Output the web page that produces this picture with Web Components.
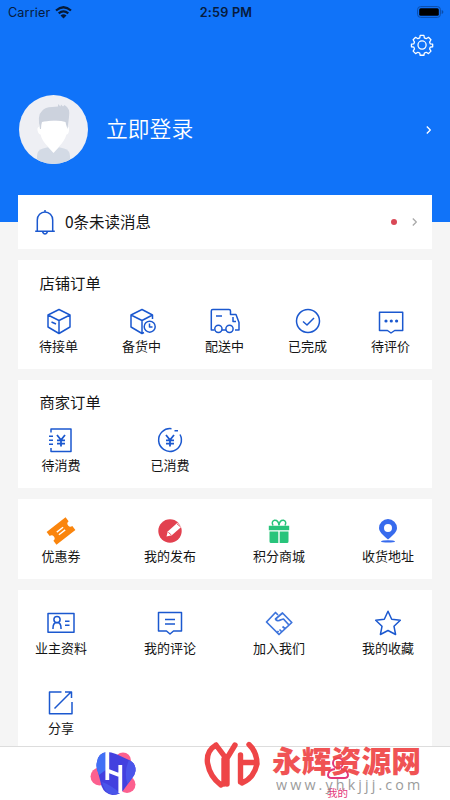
<!DOCTYPE html>
<html lang="zh-CN">
<head>
<meta charset="utf-8">
<title>我的</title>
<style>
html,body{margin:0;height:100%;overflow:hidden}
body{font-family:"Noto Sans CJK SC",sans-serif;background:#f5f5f5;color:#151515}
</style>
</head>
<body>
<profile-page></profile-page>
<script>
const define=(name,html)=>customElements.define(name,class extends HTMLElement{
  constructor(){super();this.attachShadow({mode:'open'}).innerHTML=html;}
});

const ICONS={
 box:'<path d="M15 3.500 26 9v12l-11 6.500L4 21V9ZM4 9l11 5.500L26 9M15 14.500v13M7.500 16l4.500 2"/>',
 boxclock:'<path d="M25.500 13V9L15 3.500 4 9v12l11 6.500 2-1M4 9l11 5.500L25.500 9M15 14.500v13"/><circle cx="22.700" cy="20.700" r="5.500" fill="#fff"/><path d="M22.500 17.500v3.500h3"/>',
 truck:'<path d="M4.500 24H1.300V5q0-1.500 1.500-1.500H19q1.500 0 1.500 1.500v3.500H26l3 8V24h-4M12 24h4M23 11v4.500h3M6 10h6"/><circle cx="8.400" cy="22.800" r="3.600" fill="#fff"/><circle cx="19.500" cy="22.800" r="3.600" fill="#fff"/>',
 check:'<circle cx="15" cy="15" r="11.500"/><path d="m10 15.500 4 3.500 7-7"/>',
 dots:'<path d="M3.500 6.300h23.200v18.200h-8L15 27l-3.500-2.500h-8Z"/><g fill="#1b58cf" stroke="none"><circle cx="10" cy="15" r="1.600"/><circle cx="15.300" cy="15" r="1.600"/><circle cx="20.600" cy="15" r="1.600"/></g>',
 bill:'<path d="M5 7.500V4h20v22.500H5V23M3 11.300h4M3 15.300h4M3 19.300h4"/><path stroke-width="1.800" d="m11 10 4 5 4-5M15 15v6.500M11 15.300h8M11 18.700h8"/>',
 coin:'<path d="M16.500 3.700A11.400 11.400 0 1 0 25 9.500M19.500 5.700h3.500"/><path stroke-width="1.800" d="m11 10 4 5 4-5M15 15v6.500M11 15.300h8M11 18.700h8"/>',
 ticket:'<g transform="rotate(-38 15 15)"><path fill="#fa850d" stroke="none" d="M3 7h24v5a3 3 0 0 0 0 6v5h-24v-5a3 3 0 0 0 0-6Z"/><path stroke="#fff" stroke-width="1.400" d="M11 13.300h8M11 16.700h8"/></g>',
 edit:'<circle cx="15" cy="15" r="11.700" fill="#e2414f" stroke="none"/><path fill="#fff" stroke="none" d="m11.500 20.500 1.200-5L22.500 6.800l4.300 3.700-10 8.800Z"/><path stroke="#e2414f" stroke-width="1" d="m13.500 16.300 2.500 2.500M22 7.800l3.500 3"/>',
 gift:'<g stroke="none" fill="#28c47b"><path d="M4.800 9.800h20.400v4.400H4.800ZM5.500 15.500h8.800V27H7q-1.500 0-1.500-1.500ZM15.700 15.500h8.800v10q0 1.500-1.500 1.500h-7.300Z"/></g><path stroke="#28c47b" stroke-width="1.500" d="M15 9.500q-.5-5.500-4.500-5.200-3.500 1-1.500 5.200M15 9.500q.5-5.500 4.500-5.200 3.500 1 1.500 5.200"/>',
 pin:'<path fill="#376bed" fill-rule="evenodd" stroke="none" d="M15 23.500C9 18.500 6 15.500 6 12a9 9 0 0 1 18 0c0 3.500-3 6.500-9 11.500Zm0-15.500a4 4 0 1 0 0 8 4 4 0 0 0 0-8Z"/><ellipse cx="15" cy="25.400" rx="7" ry="1.200" fill="#376bed" stroke="none"/>',
 card:'<path d="M2 5.500h26v18.700H2ZM7 21v-1q0-5.500 4-5.500t4 5.500v1M19 13.300h4.500M19 17.200h4.500"/><circle cx="11" cy="11.600" r="3.100"/>',
 comment:'<path d="M3.500 4.500h23V23h-8L15 26l-3.500-3h-8ZM10 11.500h10M10 16h10"/>',
 shake:'<g stroke="#3d74dc" stroke-width="1.700"><path d="M14 7 11.500 4.500 2.500 14 15 26.500 27.800 14.500 18.500 5 11.500 11q1.500 3 5.500.8l2.500-.8L24.500 16.500M15.500 21.500l2.500 2.500M18.500 18.500l3 2.500M13 25l1.500-2"/></g>',
 star:'<path d="m15 3.300 3.700 8 8.600 1-6.300 6 1.600 8.200-7.600-4-7.600 4L9 18.300l-6.300-6 8.600-1Z"/>',
 share:'<path d="M15.500 4H3.500v21.800H26V14M8.500 20.500 25 4M19 4h6.500v6"/>',
 bell:'<path d="M7.300 23.500V13a7.700 8 0 0 1 15.400 0v10.500M5.200 24.200h19.600M15 5V3"/><path d="M12.500 25q2.500 4 5 0"/>',
 arrow:'<path stroke-width="1.300" d="m12.800 11.500 3.500 3.500-3.500 3.500"/>',
 gear:'<g transform="translate(2.300 2.300) scale(.85)"><circle cx="15" cy="15" r="4.800"/><path d="M12.800 3.500h4.400l.5 3 2.200 1 2.700-1.600 2.900 2.900L23.900 11.500l.7 2 2.900.5v3l-2.900.5-.7 2 1.600 2.700-2.900 2.900-2.700-1.600-2.200 1-.5 2.500h-4.400l-.5-2.500-2.200-1-2.700 1.600-2.900-2.900 1.600-2.700-.7-2-2.900-.5v-3l2.900-.5.7-2L4.500 8.800l2.900-2.900 2.700 1.600 2.200-1Z"/></g>'
};
customElements.define('line-icon',class extends HTMLElement{
  connectedCallback(){
    this.attachShadow({mode:'open'}).innerHTML=`<style>:host{display:block;width:30px;height:30px;flex:none;color:#1b58cf}svg{display:block}</style><svg width="30" height="30" viewBox="0 0 30 30" fill="none" stroke="currentColor" stroke-width="1.500" stroke-linejoin="round">${ICONS[this.getAttribute('name')]}</svg>`;
  }
});

customElements.define('menu-item',class extends HTMLElement{
  connectedCallback(){
    this.attachShadow({mode:'open'}).innerHTML=`<style>:host{display:flex;flex-direction:column;align-items:center;font-size:13px;line-height:20px;white-space:nowrap}span{margin-top:-.5px}</style><line-icon name="${this.getAttribute('icon')}"></line-icon><span><slot></slot></span>`;
  }
});

define('menu-card',`<style>
:host{display:block;background:#fff;box-sizing:border-box;overflow:hidden;height:var(--h);padding-top:var(--pt)}
h2{margin:0 0 var(--gap,14px) 21.500px;font-weight:400;font-size:15.300px;line-height:20px}
h2:not(.on){display:none}
.grid{display:grid;grid-template-columns:repeat(4,74px);column-gap:35px;row-gap:30.500px;padding-left:6px}
:host([five]) .grid{grid-template-columns:repeat(5,83px);column-gap:0;padding:0;margin-left:-1px}
</style><h2><slot name="title"></slot></h2><div class="grid"><slot></slot></div>`);
customElements.whenDefined('menu-card').then(()=>{
  for(const c of document.querySelector('profile-page').shadowRoot.querySelectorAll('menu-card'))
    c.shadowRoot.querySelector('h2').classList.toggle('on',!!c.querySelector('[slot=title]'));
});

define('status-bar',`<style>
:host{display:grid;grid-template-columns:1fr auto 1fr;align-items:center;height:24px;padding:0 6px 0 8px;font:12.700px/23px Inter,sans-serif;color:#071b3c}
.l{display:flex;align-items:center;gap:5px;letter-spacing:.1px}b{font-weight:600;letter-spacing:.2px;font-size:12.700px}.r{justify-self:end;display:flex}
</style><div class="l">Carrier<svg width="17" height="13" viewBox="0 0 17 13" fill="none" stroke="#061a38" stroke-width="2.200"><path d="M1 4.500Q8.500-2 16 4.500M3.700 7.300q4.800-4 9.600 0"/><path fill="#061a38" stroke="none" d="M5.500 9.500q3-2.400 6 0l-3 3Z"/></svg></div><b>2:59 PM</b><div class="r"><svg width="27" height="12" viewBox="0 0 27 12"><rect x=".6" y=".6" width="22.800" height="10.800" rx="3" fill="none" stroke="#0c4da9"/><rect x="2.200" y="2.200" width="19.600" height="7.600" rx="1.500" fill="#000"/><path d="M24.700 4v4q1.700-.7 1.700-2t-1.700-2" fill="#0c4da9"/></svg></div>`);

define('user-avatar',`<style>:host{display:block;width:69px;height:69px}svg{display:block}</style>
<svg width="69" height="69" viewBox="0 0 69 69"><defs><clipPath id="c"><circle cx="34.500" cy="34.500" r="34.500"/></clipPath></defs><g clip-path="url(#c)"><path fill="#eeeff4" d="M0 0h69v69H0z"/><path fill="#d3dae5" d="M18 69V61q0-6 6-7.500l6-1.500h9l6 1.500q6 1.500 6 7.500v8Z"/><path fill="#fff" d="M29 47h11v5l-5.500 6L29 52Z"/><path fill="#fff" d="M20.500 26h28l.5 6q1.500 0 1 3.500-.5 4-2.500 4-2 6.500-7.500 12-5.500 5-11 0-6-5.500-7.500-12-2 0-3-4-.5-3.500 1.500-3.500Z"/><path fill="#ccd2dd" d="M21 34q-3-14 2-18 3-4 10-4l6-.5V9l2.500 2.500.5-2 2 2 1.500-1.500q6 3 4.500 12l-1.500 12Q47 30 46.500 27q-5-2-12-1.500Q27 26 23 27q-1 3-1 7Z"/></g></svg>`);

define('profile-header',`<style>
:host{display:block;height:222px;background:#1073f9}
.set{display:flex;justify-content:flex-end;padding:6px 13.500px 0 0;height:30px}
.user{display:flex;align-items:center;padding:35px 6px 0 19px}
.name{font-size:21.800px;line-height:30px;color:#fff;margin:-4px 0 0 18px;flex:1;font-weight:350}
line-icon{color:#fff}
</style><status-bar></status-bar><div class="set"><line-icon name="gear"></line-icon></div><div class="user"><user-avatar></user-avatar><span class="name">立即登录</span><line-icon name="arrow"></line-icon></div>`);

define('message-row',`<style>
:host{display:flex;align-items:center;height:54px;background:#fff;padding:0 2px 0 12px;font-size:15.500px}
span{margin:-2px 0 0 5px;flex:1}i{width:6px;height:6px;border-radius:50%;background:#d94856;margin-right:3px}
.a{color:#aaa}
</style><line-icon name="bell"></line-icon><span><slot></slot></span><i></i><line-icon class="a" name="arrow"></line-icon>`);

define('tab-bar',`<style>
:host{display:grid;grid-template-columns:1fr 1fr;height:54px;box-sizing:border-box;background:#fff;border-top:1px solid #ddd}
.t{display:flex;flex-direction:column;align-items:center}
.logo{padding-top:4px}.me{color:#e43779;font-size:10.500px;line-height:14px;padding-top:8px}
svg{display:block}
</style><div class="t logo"><svg width="46" height="46" viewBox="0 0 46 46"><g fill="#fc608f"><circle cx="9.500" cy="25.500" r="9"/><circle cx="33" cy="9.500" r="8"/><circle cx="37" cy="33.500" r="8.500"/></g><path d="M7 11Q8 2 17 1q4 0 9 2l13 6q7 3 6.500 11-.5 4-4 8l-8 11q-4 5-11 5-8-1-11-9L7.500 19q-1.500-4-.5-8Z" fill="#4340df"/><path d="M7 11Q8 2 17 1v17L9 24Q5 16 7 11Z" fill="#4270f5"/><path d="M39 9q7 3 6.500 11-.5 4-4 8l-4 5q-4-12 1.500-24M12 31q9 3 18 11-6 3-12 0-4-3-6-11" fill="#4a55ea"/><path d="M17.300 0v29M30.300 14v28M17.300 19.500l13 5" fill="none" stroke="#fff" stroke-width="3.800"/></svg></div>
<div class="t me"><svg width="22" height="31" viewBox="0 0 22 31" fill="none" stroke="currentColor" stroke-width="2"><circle cx="11" cy="8" r="5"/><path d="M8 14Q1 15 1 20q0 3 4 3h12q4 0 4-3 0-5-7-6"/></svg><span>我的</span></div>`);

define('site-mark',`<style>
:host{position:absolute;left:204px;top:740px;display:flex;width:240px;height:60px;pointer-events:none}
.w{margin-left:12px;display:flex;flex-direction:column;white-space:nowrap}
b{font-size:29.800px;font-weight:900;line-height:30px;height:35px;padding-top:4px;box-sizing:border-box;color:#ef4648;opacity:.93}
small{font:14.300px/20px "Open Sans",sans-serif;letter-spacing:3.120px;color:#8b8b8b;opacity:.85;margin:0 0 0 4px}
</style><svg width="56" height="50" viewBox="0 0 56 50" fill="none" stroke="#ee4547" stroke-width="5.400" stroke-linecap="round" stroke-linejoin="round"><path d="M12 5Q2 11 3.500 23 6 37 17 45M12 5l10.500 14L31 5M20 19v25M23 19v25M45 4.500Q53 12 53 24 50 38 38 43M36.500 15v27M37 22.500h15"/></svg><div class="w"><b>永辉资源网</b><small>www.yhkjjj.com</small></div>`);

define('profile-page',`<style>
:host{position:relative;display:flex;flex-direction:column;width:450px;height:800px;overflow:hidden;background:#f5f5f5}
profile-header{flex:none}
main{flex:1;min-height:0;margin-top:-27px;padding:0 18px;display:flex;flex-direction:column;gap:11px}
main>*{flex:none}
</style><profile-header></profile-header><main>
<message-row>0条未读消息</message-row>
<menu-card five style="--h:109px;--pt:12px"><span slot="title">店铺订单</span><menu-item icon="box">待接单</menu-item><menu-item icon="boxclock">备货中</menu-item><menu-item icon="truck">配送中</menu-item><menu-item icon="check">已完成</menu-item><menu-item icon="dots">待评价</menu-item></menu-card>
<menu-card style="--h:108px;--pt:11px"><span slot="title">商家订单</span><menu-item icon="bill">待消费</menu-item><menu-item icon="coin">已消费</menu-item></menu-card>
<menu-card style="--h:80px;--pt:17px"><menu-item icon="ticket">优惠券</menu-item><menu-item icon="edit">我的发布</menu-item><menu-item icon="gift">积分商城</menu-item><menu-item icon="pin">收货地址</menu-item></menu-card>
<menu-card style="--h:156px;--pt:18px"><menu-item icon="card">业主资料</menu-item><menu-item icon="comment">我的评论</menu-item><menu-item icon="shake">加入我们</menu-item><menu-item icon="star">我的收藏</menu-item><menu-item icon="share">分享</menu-item></menu-card>
</main><tab-bar></tab-bar><site-mark></site-mark>`);
</script>
</body>
</html>
